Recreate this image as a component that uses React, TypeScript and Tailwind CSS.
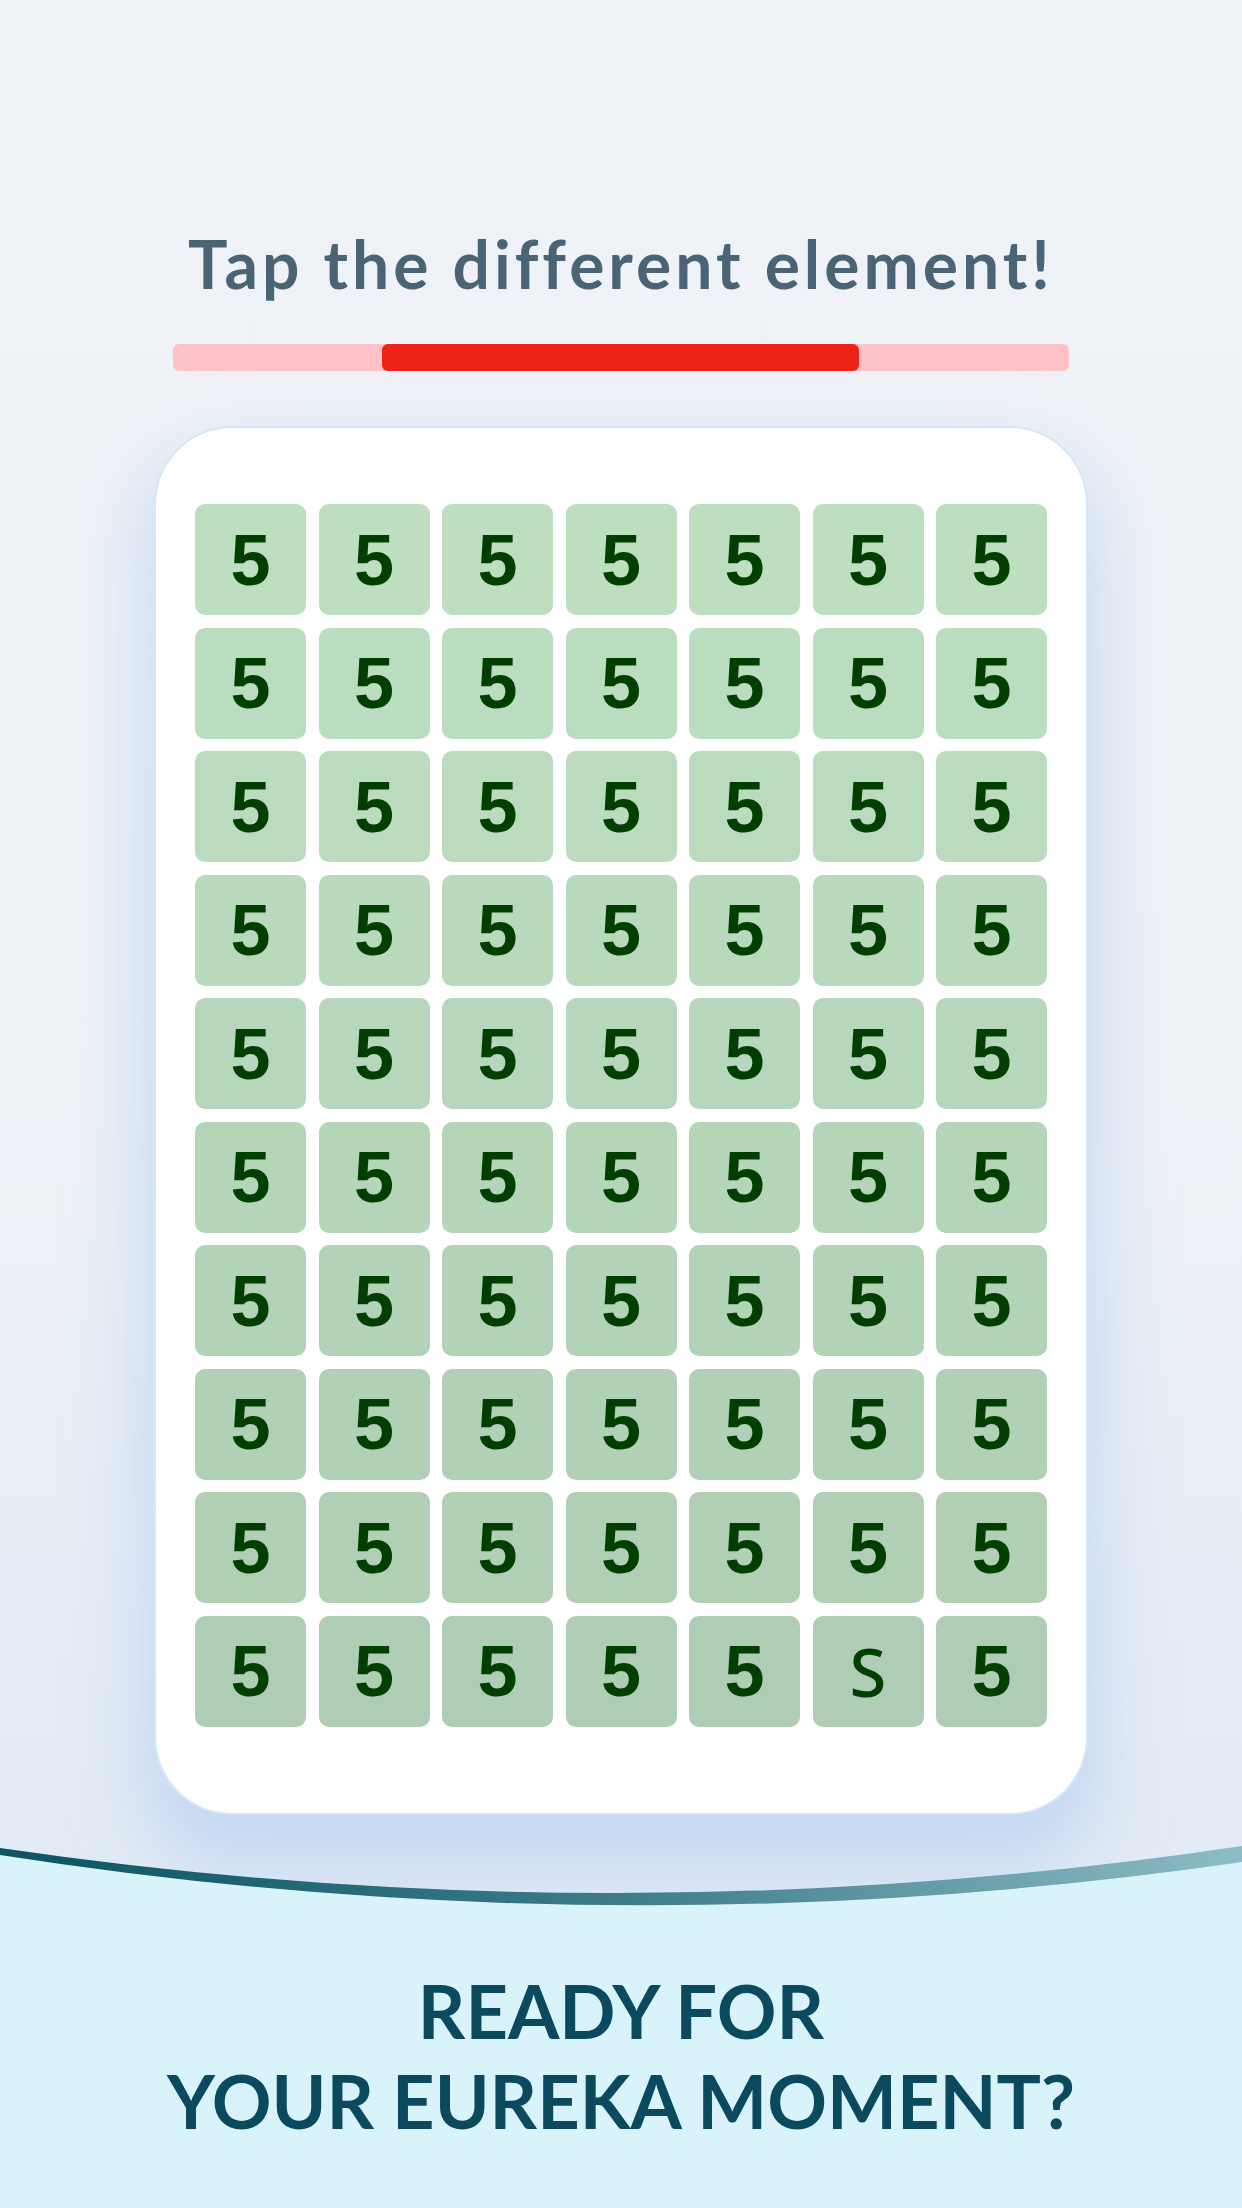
const ROWS = 10
const COLS = 7
const ODD_ROW = 9
const ODD_COL = 5

// tiles get a little darker towards the bottom of the board
const rowColors = [
  "bg-[#bddfc0]",
  "bg-[#bbddbf]",
  "bg-[#badbbd]",
  "bg-[#b8d9bc]",
  "bg-[#b6d7bb]",
  "bg-[#b5d5b9]",
  "bg-[#b3d3b8]",
  "bg-[#b1d1b7]",
  "bg-[#b0cfb5]",
  "bg-[#aecdb4]",
]

function Tile({ row, col }: { row: number; col: number }) {
  const isOdd = row === ODD_ROW && col === ODD_COL

  return (
    <button
      type="button"
      className={`flex h-[111px] w-[111px] items-center justify-center rounded-[10px] ${rowColors[row]}`}
    >
      {isOdd ? (
        <span className="font-['Noto_Sans',sans-serif] text-[67px] font-medium leading-none text-[#003f00]">
          S
        </span>
      ) : (
        <span className="font-['Liberation_Sans',sans-serif] text-[72px] font-bold leading-none text-[#003f00]">
          5
        </span>
      )}
    </button>
  )
}

function Wave() {
  return (
    <svg
      className="block h-[107px] w-[1242px] shrink-0"
      viewBox="0 1813 1242 107"
      preserveAspectRatio="none"
    >
      <defs>
        <linearGradient id="waveLine" x1="0" x2="1" y1="0" y2="0">
          <stop offset="0" stopColor="#0c5363" />
          <stop offset="0.5" stopColor="#3d7c89" />
          <stop offset="1" stopColor="#8dbcc6" />
        </linearGradient>
      </defs>
      <path
        d="M0 1855 Q621 1952 1242 1862 L1242 1920 L0 1920 Z"
        fill="#d9f3fa"
      />
      <path
        d="M0 1848 Q621 1939 1242 1846 L1242 1862 Q621 1952 0 1855 Z"
        fill="url(#waveLine)"
      />
    </svg>
  )
}

export default function App() {
  return (
    <main className="flex h-[2208px] w-[1242px] flex-col items-center overflow-hidden bg-gradient-to-b from-[#eff3f8] via-[#eef2f7] to-[#dde8f5]">
      <h1 className="mt-[231px] h-[66px] font-['Lato',sans-serif] text-[66px] font-bold leading-none tracking-[4px] text-[#4a6475]">
        Tap the different element!
      </h1>

      <div className="mt-[47px] flex h-[27px] w-[896px] rounded-[6px] bg-[#ffc2c8]">
        <div className="ml-[209px] h-full w-[477px] rounded-[6px] bg-[#ee2418]" />
      </div>

      <section className="mt-[57px] flex h-[1385px] w-[930px] shrink-0 justify-center rounded-[76px] bg-white pt-[76px] shadow-[0_0_0_2px_#d7e6f6,0_40px_70px_14px_rgba(165,195,240,0.5)]">
        <div className="grid grid-cols-7 gap-[12.5px] self-start">
          {Array.from({ length: ROWS * COLS }, (_, i) => (
            <Tile key={i} row={Math.floor(i / COLS)} col={i % COLS} />
          ))}
        </div>
      </section>

      <Wave />

      <div className="flex w-full flex-1 flex-col items-center bg-[#d9f3fa] pt-[46px] font-['Lato',sans-serif] text-[74px] font-bold leading-[90px] tracking-[0px] text-[#0b4a5e]">
        <p>READY FOR</p>
        <p>YOUR EUREKA MOMENT?</p>
      </div>
    </main>
  )
}
